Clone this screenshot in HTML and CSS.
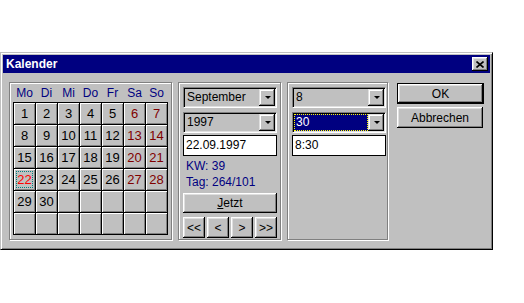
FILE: index.html
```html
<!DOCTYPE html>
<html lang="de">
<head>
    <meta charset="UTF-8">
    <title>Kalender</title>
    <link rel="stylesheet" href="styles.css">
</head>
<body>
<div class="window">
    <div class="titlebar">
        <span class="title">Kalender</span>
        <span class="close">
            <svg width="8" height="7" viewBox="0 0 8 7"><path d="M0.5 0.5 L7.5 6.5 M7.5 0.5 L0.5 6.5" stroke="#000" stroke-width="1.6" fill="none"/></svg>
        </span>
    </div>
    <div class="content">
        <!-- Monatsblatt -->
        <div class="group calendar">
            <div class="weekdays">
                <span>Mo</span><span>Di</span><span>Mi</span><span>Do</span><span>Fr</span><span>Sa</span><span>So</span>
            </div>
            <div class="days">
                <div class="day">1</div><div class="day">2</div><div class="day">3</div><div class="day">4</div><div class="day">5</div><div class="day we">6</div><div class="day we">7</div>
                <div class="day">8</div><div class="day">9</div><div class="day">10</div><div class="day">11</div><div class="day">12</div><div class="day we">13</div><div class="day we">14</div>
                <div class="day">15</div><div class="day">16</div><div class="day">17</div><div class="day">18</div><div class="day">19</div><div class="day we">20</div><div class="day we">21</div>
                <div class="day today"><span>22</span></div><div class="day">23</div><div class="day">24</div><div class="day">25</div><div class="day">26</div><div class="day we">27</div><div class="day we">28</div>
                <div class="day">29</div><div class="day">30</div><div class="day"></div><div class="day"></div><div class="day"></div><div class="day"></div><div class="day"></div>
                <div class="day"></div><div class="day"></div><div class="day"></div><div class="day"></div><div class="day"></div><div class="day"></div><div class="day"></div>
            </div>
        </div>
        <!-- Datum -->
        <div class="group datebox">
            <div class="combo"><span class="value">September</span><span class="drop"><i></i></span></div>
            <div class="combo"><span class="value">1997</span><span class="drop"><i></i></span></div>
            <div class="edit">22.09.1997</div>
            <div class="info first">KW: 39</div>
            <div class="info">Tag: 264/101</div>
            <button class="btn jetzt"><u>J</u>etzt</button>
            <div class="nav">
                <button class="btn">&lt;&lt;</button>
                <button class="btn">&lt;</button>
                <button class="btn">&gt;</button>
                <button class="btn">&gt;&gt;</button>
            </div>
        </div>
        <!-- Uhrzeit -->
        <div class="group timebox">
            <div class="combo"><span class="value">8</span><span class="drop"><i></i></span></div>
            <div class="combo"><span class="value selected">30</span><span class="drop"><i></i></span></div>
            <div class="edit">8:30</div>
        </div>
        <div class="actions">
            <button class="btn default">OK</button>
            <button class="btn cancel">Abbrechen</button>
        </div>
    </div>
</div>
</body>
</html>
```

FILE: styles.css
```css
*{margin: 0;padding: 0;box-sizing: border-box;}
body {
    background: #fff;
    font-family: "Liberation Sans", Arial, sans-serif;
    font-size: 12px;
    color: #000;
}
/*========Fenster========*/
.window {
    margin-top: 52px;
    width: 493px;
    height: 198px;
    padding: 2px;
    background: #c0c0c0;
    border: 1px solid;
    border-color: #c0c0c0 #000 #000 #c0c0c0;
    box-shadow: inset 1px 1px #fff, inset -1px -1px #808080;
}
.titlebar {
    height: 18px;
    padding: 0 2px 0 3px;
    display: flex;
    align-items: center;
    justify-content: space-between;
    background: #000080;
    color: #fff;
    font-weight: bold;
    font-size: 12px;
}
.close {
    width: 16px;
    height: 14px;
    display: flex;
    align-items: center;
    justify-content: center;
    background: #c0c0c0;
    box-shadow: inset -1px -1px #000, inset 1px 1px #fff, inset -2px -2px #808080, inset 2px 2px #dfdfdf;
}
.close svg {
    display: block;
}
.content {
    display: flex;
    align-items: flex-start;
    padding: 9px 0 0 6px;
}
/*========Gruppen========*/
.group {
    height: 158px;
    border: 1px solid #808080;
    box-shadow: inset 1px 1px #fff, 1px 1px #fff;
}
.calendar {
    width: 163px;
    padding: 0 3px 4px;
}
.datebox {
    width: 103px;
    margin-left: 6px;
    padding: 4px 3px 1px 4px;
}
.timebox {
    width: 101px;
    margin-left: 6px;
    padding: 4px 1px 1px 4px;
}
/*========Kalender========*/
.weekdays {
    height: 19px;
    padding-left: 1px;
    display: grid;
    grid-template-columns: repeat(7, 21px);
    column-gap: 1px;
    align-items: center;
    color: #000080;
    text-align: center;
}
.days {
    display: grid;
    grid-template-columns: repeat(7, 21px);
    grid-auto-rows: 21px;
    gap: 1px;
    padding: 1px;
    background: #000;
}
.day {
    background: #c0c0c0;
    box-shadow: inset 1px 1px #fff, inset -1px -1px #808080;
    font-size: 13px;
    line-height: 21px;
    text-align: center;
}
.day.we {
    color: #800000;
}
.day.today {
    color: #f00;
    padding: 2px;
    line-height: 17px;
}
.day.today span {
    display: block;
    height: 17px;
    outline: 1px dotted #008080;
    outline-offset: -1px;
}
/*========Eingabefelder========*/
.combo {
    display: flex;
    height: 21px;
    width: 94px;
    padding: 1px;
    background: #c0c0c0;
    border: 1px solid;
    border-color: #808080 #fff #fff #808080;
    box-shadow: inset 1px 1px #000, inset -1px -1px #dfdfdf;
}
.combo + .combo {
    margin-top: 4px;
}
.combo .value {
    flex: 1;
    padding-left: 2px;
    line-height: 17px;
}
.combo .value.selected {
    background: #000080;
    color: #fff;
    outline: 1px dotted #ff0;
    outline-offset: -1px;
}
.drop {
    width: 16px;
    height: 17px;
    display: flex;
    align-items: center;
    justify-content: center;
    box-shadow: inset -1px -1px #000, inset 1px 1px #dfdfdf, inset -2px -2px #808080, inset 2px 2px #fff;
}
.drop i {
    width: 0;
    height: 0;
    border-left: 3px solid transparent;
    border-right: 3px solid transparent;
    border-top: 3px solid #000;
    margin-left: 1px;
}
.edit {
    width: 94px;
    height: 21px;
    margin-top: 2px;
    padding-left: 2px;
    background: #fff;
    border: 1px solid #000;
    line-height: 19px;
}
.info {
    height: 16px;
    line-height: 16px;
    padding-left: 3px;
    color: #000080;
}
.info.first {
    margin-top: 2px;
}
/*========Knoepfe========*/
.btn {
    display: block;
    background: #c0c0c0;
    border: none;
    color: #000;
    font-family: "Liberation Sans", Arial, sans-serif;
    font-size: 12px;
    box-shadow: inset -1px -1px #000, inset 1px 1px #fff, inset -2px -2px #808080, inset 2px 2px #dfdfdf;
}
.jetzt {
    width: 94px;
    height: 20px;
    margin-top: 3px;
}
.nav {
    width: 94px;
    margin-top: 4px;
    display: flex;
    gap: 2px;
}
.nav .btn {
    flex: 1;
    height: 21px;
}
.actions {
    margin-left: 9px;
    margin-top: 1px;
}
.default {
    width: 87px;
    height: 21px;
    border: 1px solid #000;
}
.cancel {
    width: 86px;
    height: 21px;
    margin-top: 3px;
}
```
